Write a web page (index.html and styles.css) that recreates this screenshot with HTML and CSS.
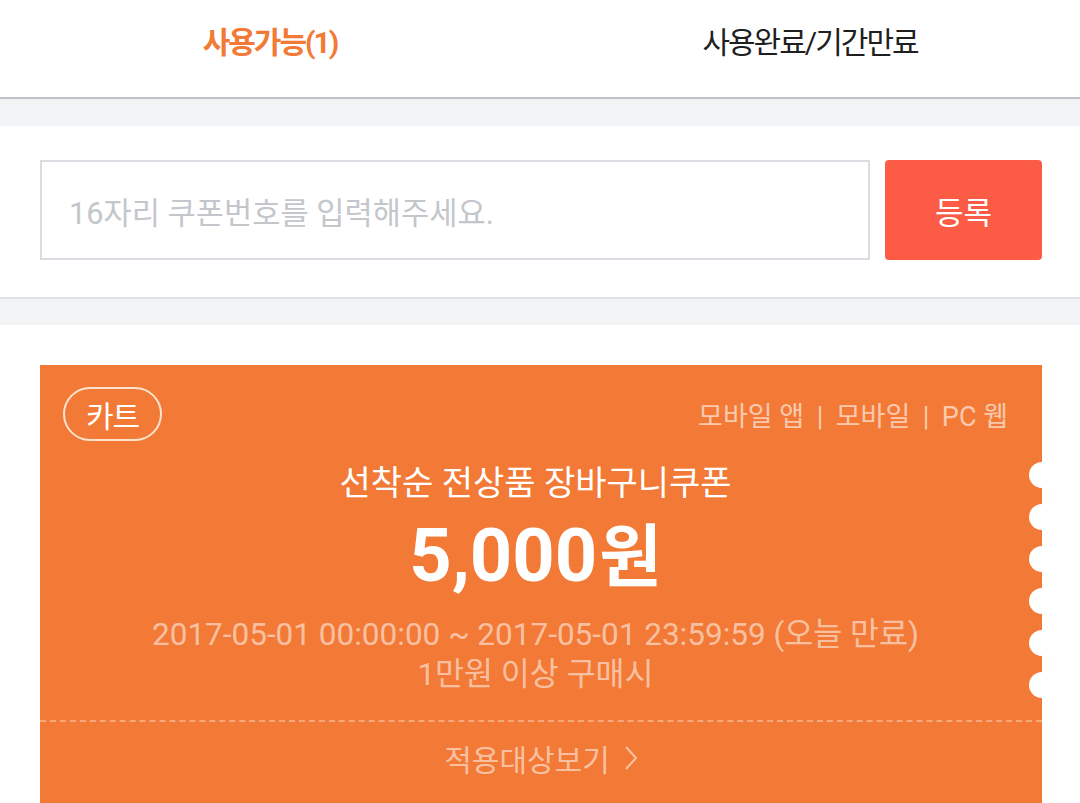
FILE: index.html
```html
<!DOCTYPE html>
<html lang="ko">
<head>
<meta charset="utf-8">
<title>쿠폰</title>
<link rel="stylesheet" href="styles.css">
</head>
<body>
<nav class="tabs">
  <div class="tab tab-active">사용가능(1)</div>
  <div class="tab">사용완료/기간만료</div>
</nav>
<div class="gap gap-top"></div>
<section class="register">
  <div class="coupon-input">16자리 쿠폰번호를 입력해주세요.</div>
  <button class="register-btn" type="button">등록</button>
</section>
<div class="gap"></div>
<section class="list">
  <article class="coupon">
    <div class="coupon-body">
      <div class="coupon-head">
        <span class="tag">카트</span>
        <span class="channels">모바일 앱<span class="sep">|</span>모바일<span class="sep">|</span>PC 웹</span>
      </div>
      <h2 class="coupon-title">선착순 전상품 장바구니쿠폰</h2>
      <div class="coupon-amount">5,000<span class="won">원</span></div>
      <p class="coupon-date">2017-05-01 00:00:00 ~ 2017-05-01 23:59:59 (오늘 만료)</p>
      <p class="coupon-cond">1만원 이상 구매시</p>
      <div class="notches">
        <span class="notch"></span><span class="notch"></span><span class="notch"></span>
        <span class="notch"></span><span class="notch"></span><span class="notch"></span>
      </div>
    </div>
    <div class="coupon-foot">적용대상보기 <svg class="chev" width="14" height="28" viewBox="0 0 14 28"><path d="M2 3 L12 14 L2 25" fill="none" stroke="currentColor" stroke-width="2"/></svg></div>
  </article>
</section>
</body>
</html>
```
FILE: styles.css
```css
* { box-sizing: border-box; }
html, body { margin: 0; padding: 0; }
body {
  background: #ffffff;
  font-family: Roboto, "Noto Sans CJK KR", sans-serif;
  width: 1080px;
  height: 803px;
  overflow: hidden;
}
.tabs {
  display: flex;
  height: 99px;
  border-bottom: 2px solid #bcc3cd;
}
.tab {
  flex: 1;
  text-align: center;
  padding-top: 23px;
  font-size: 30px;
  line-height: 40px;
  color: #1f1f1f;
  letter-spacing: -2px;
}
.tab-active { color: #f27a36; font-weight: 700; }
.gap {
  height: 28px;
  background: #f2f3f5;
  border-top: 2px solid #dfe2e6;
}
.gap-top { height: 27px; border-top: none; }
.register {
  display: flex;
  gap: 15px;
  padding: 34px 38px 37px 40px;
}
.coupon-input {
  flex: 1;
  height: 100px;
  border: 2px solid #d9dde1;
  padding: 0 27px;
  display: flex;
  align-items: center;
  font-size: 30.7px;
  color: #c3c6ca;
  letter-spacing: 0;
}
.register-btn {
  width: 157px;
  height: 100px;
  border: none;
  border-radius: 4px;
  background: #fc5c45;
  color: #ffffff;
  font-family: Roboto, "Noto Sans CJK KR", sans-serif;
  font-size: 31px;
  padding: 0;
}
.list { padding: 40px 38px 0 40px; }
.coupon {
  background: #f27a36;
  color: #ffffff;
}
.coupon-body {
  position: relative;
  padding: 22px 34px 25px 23px;
  text-align: center;
}
.coupon-head {
  display: flex;
  justify-content: space-between;
  align-items: center;
}
.tag {
  display: inline-flex;
  align-items: center;
  justify-content: center;
  width: 99px;
  height: 54px;
  border: 2px solid #fde3cf;
  border-radius: 27px;
  font-size: 30px;
  letter-spacing: -1px;
}
.channels {
  font-size: 27px;
  color: rgba(255, 255, 255, 0.62);
  letter-spacing: 0;
}
.sep { margin: 0 12.5px; }
.coupon-title {
  margin: 19px 0 0;
  font-weight: 400;
  font-size: 34px;
  line-height: 46px;
  letter-spacing: 0;
}
.coupon-amount {
  font-weight: 700;
  font-size: 74px;
  line-height: 96px;
  margin-top: 2px;
}
.won { font-size: 68px; margin-left: 2px; }
.coupon-date, .coupon-cond {
  margin: 0;
  font-size: 31.5px;
  line-height: 40px;
  color: rgba(255, 255, 255, 0.55);
  letter-spacing: 0;
}
.coupon-date { margin-top: 9px; }
.notches {
  position: absolute;
  right: -13px;
  top: 97px;
  display: flex;
  flex-direction: column;
  gap: 16px;
}
.notch {
  width: 26px;
  height: 26px;
  border-radius: 50%;
  background: #ffffff;
}
.coupon-foot {
  border-top: 2px dashed rgba(255, 255, 255, 0.35);
  height: 84px;
  display: flex;
  align-items: center;
  justify-content: center;
  gap: 14px;
  font-size: 30px;
  color: rgba(255, 255, 255, 0.55);
  letter-spacing: 0;
  padding-bottom: 10px;
}
.chev { display: block; }
```
